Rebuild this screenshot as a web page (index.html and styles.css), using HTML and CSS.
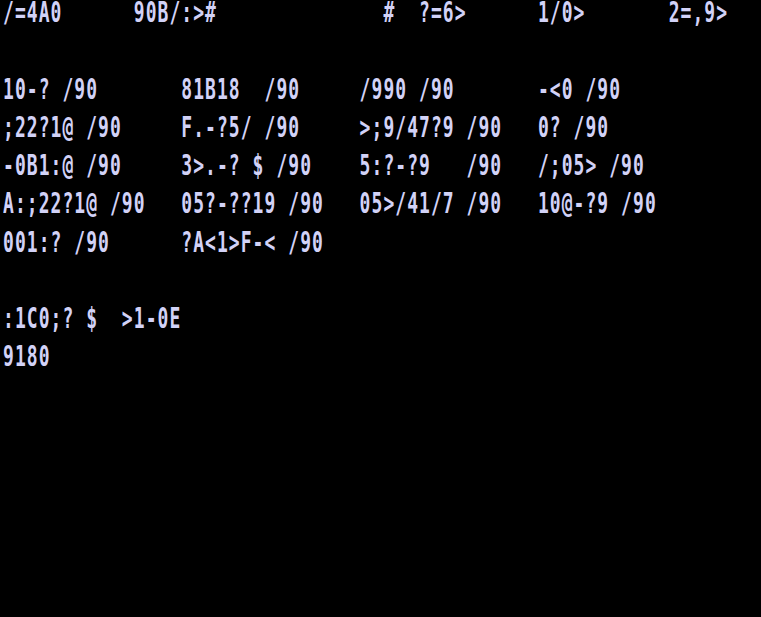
FILE: index.html
```html
<!DOCTYPE html>
<html>
<head>
<meta charset="utf-8">
<link rel="stylesheet" href="styles.css">
</head>
<body>
<div class="screen">
<div class="line">/=4A0      90B/:&gt;#              #  ?=6&gt;      1/0&gt;       2=,9&gt;</div>
<div class="line"> </div>
<div class="line">10-? /90       81B18  /90     /990 /90       -&lt;0 /90</div>
<div class="line">;22?1@ /90     F.-?5/ /90     &gt;;9/47?9 /90   0? /90</div>
<div class="line">-0B1:@ /90     3&gt;.-? $ /90    5:?-?9   /90   /;05&gt; /90</div>
<div class="line">A:;22?1@ /90   05?-??19 /90   05&gt;/41/7 /90   10@-?9 /90</div>
<div class="line">001:? /90      ?A&lt;1&gt;F-&lt; /90</div>
<div class="line"> </div>
<div class="line">:1C0;? $  &gt;1-0E</div>
<div class="line">9180</div>
</div>
</body>
</html>
```
FILE: styles.css
```css
html, body {
  margin: 0;
  padding: 0;
  background: #000;
  width: 761px;
  height: 617px;
  overflow: hidden;
}
.screen {
  padding: 1px 0 0 3px;
  color: #d2d2f7;
  font-family: "DejaVu Sans Mono", "Liberation Mono", monospace;
  font-weight: bold;
  font-size: 18px;
  letter-spacing: 1.05px;
}
.line {
  white-space: pre;
  height: 38.25px;
  line-height: 14px;
  transform: scaleY(1.6);
  transform-origin: 0 0;
}
```
